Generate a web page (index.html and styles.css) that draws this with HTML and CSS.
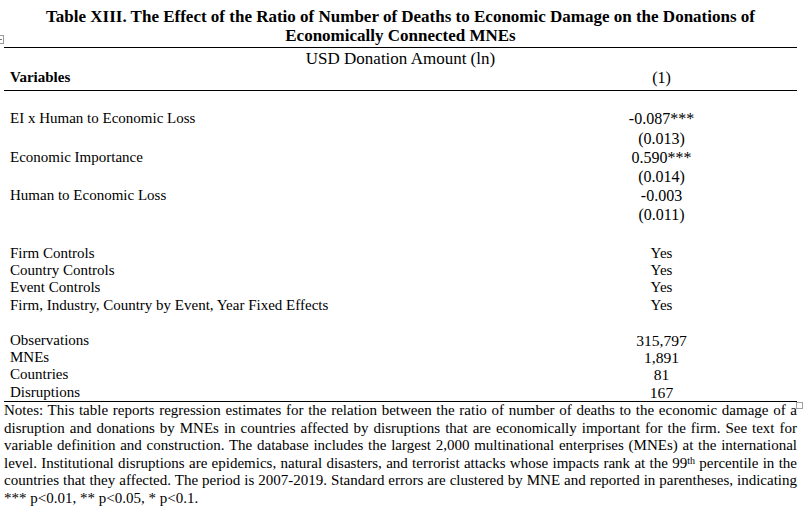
FILE: index.html
```html
<!DOCTYPE html>
<html>
<head>
<meta charset="utf-8">
<link rel="stylesheet" href="styles.css">
</head>
<body>
<div class="page">
  <h1 class="title">Table XIII. The Effect of the Ratio of Number of Deaths to Economic Damage on the Donations of<br>Economically Connected MNEs</h1>
  <div class="table-wrap">
    <span class="move-handle"></span>
    <table class="reg">
      <tbody>
        <tr class="head-row"><td colspan="2" class="center">USD Donation Amount (ln)</td></tr>
        <tr class="var-row"><td class="bold label">Variables</td><td class="center num">(1)</td></tr>
        <tr class="spacer"><td></td><td></td></tr>
        <tr class="coef"><td class="label">EI x Human to Economic Loss</td><td class="center num">-0.087***</td></tr>
        <tr class="coef"><td></td><td class="center num">(0.013)</td></tr>
        <tr class="coef"><td class="label">Economic Importance</td><td class="center num">0.590***</td></tr>
        <tr class="coef"><td></td><td class="center num">(0.014)</td></tr>
        <tr class="coef"><td class="label">Human to Economic Loss</td><td class="center num">-0.003</td></tr>
        <tr class="coef"><td></td><td class="center num">(0.011)</td></tr>
        <tr class="blank-coef"><td></td><td></td></tr>
        <tr class="ctrl"><td class="label">Firm Controls</td><td class="center">Yes</td></tr>
        <tr class="ctrl"><td class="label">Country Controls</td><td class="center">Yes</td></tr>
        <tr class="ctrl"><td class="label">Event Controls</td><td class="center">Yes</td></tr>
        <tr class="ctrl"><td class="label">Firm, Industry, Country by Event, Year Fixed Effects</td><td class="center">Yes</td></tr>
        <tr class="ctrl blank"><td></td><td></td></tr>
        <tr class="ctrl"><td class="label">Observations</td><td class="center stat">315,797</td></tr>
        <tr class="ctrl"><td class="label">MNEs</td><td class="center stat">1,891</td></tr>
        <tr class="ctrl"><td class="label">Countries</td><td class="center stat">81</td></tr>
        <tr class="ctrl last"><td class="label">Disruptions</td><td class="center stat">167</td></tr>
      </tbody>
    </table>
    <span class="resize-handle"></span>
  </div>
  <p class="notes">Notes: This table reports regression estimates for the relation between the ratio of number of deaths to the economic damage of a disruption and donations by MNEs in countries affected by disruptions that are economically important for the firm. See text for variable definition and construction. The database includes the largest 2,000 multinational enterprises (MNEs) at the international level. Institutional disruptions are epidemics, natural disasters, and terrorist attacks whose impacts rank at the 99<sup>th</sup> percentile in the countries that they affected. The period is 2007-2019. Standard errors are clustered by MNE and reported in parentheses, indicating *** p&lt;0.01, ** p&lt;0.05, * p&lt;0.1.</p>
</div>
</body>
</html>
```

FILE: styles.css
```css
html, body {
  margin: 0;
  padding: 0;
  background: #ffffff;
}

body {
  font-family: "Liberation Serif", "Times New Roman", serif;
  color: #000000;
  font-size: 15px;
}

.page {
  width: 793px;
  margin-left: 4px;
}

.title {
  margin: 0;
  padding-top: 8px;
  font-size: 17px;
  line-height: 18.5px;
  font-weight: bold;
  text-align: center;
  height: 39px;
}

.table-wrap {
  position: relative;
}

.reg {
  width: 793px;
  border-collapse: collapse;
  border-top: 1px solid #000;
  font-size: 15px;
}

.reg td {
  padding: 0;
  vertical-align: top;
  white-space: nowrap;
}

.reg td:first-child {
  width: 516px;
}

.label {
  padding-left: 6px !important;
}

.center {
  text-align: center;
}

.num {
  font-size: 16px;
}

.stat {
  font-size: 15.6px;
}

.bold {
  font-weight: bold;
}

.head-row td {
  font-size: 17px;
  line-height: 17.5px;
  padding-top: 1.5px;
}

.var-row td {
  line-height: 17.5px;
  padding-top: 1.5px;
  padding-bottom: 4px;
  border-bottom: 1px solid #000;
}

.spacer td {
  height: 18.3px;
}

.coef td {
  line-height: 19.2px;
  height: 19.2px;
}

.blank-coef td {
  height: 20px;
}

.ctrl td {
  line-height: 17.4px;
  height: 17.4px;
}

.ctrl.last td {
  border-bottom: 1px solid #000;
}

.move-handle {
  position: absolute;
  left: -9px;
  top: -12px;
  width: 7px;
  height: 7px;
  border: 1px solid #9a9a9a;
  background: #fff;
}

.move-handle::before {
  content: "";
  position: absolute;
  left: 3px;
  top: 1px;
  width: 1px;
  height: 5px;
  background: #777;
}

.move-handle::after {
  content: "";
  position: absolute;
  left: 1px;
  top: 3px;
  width: 5px;
  height: 1px;
  background: #777;
}

.resize-handle {
  position: absolute;
  right: -6px;
  bottom: -7px;
  width: 5px;
  height: 5px;
  border: 1px solid #a0a0a0;
  background: #fff;
}

.notes {
  margin: 0;
  font-size: 15px;
  line-height: 17.5px;
  text-align: justify;
}

.notes sup {
  font-size: 10px;
  line-height: 0;
  vertical-align: 4px;
}
```
